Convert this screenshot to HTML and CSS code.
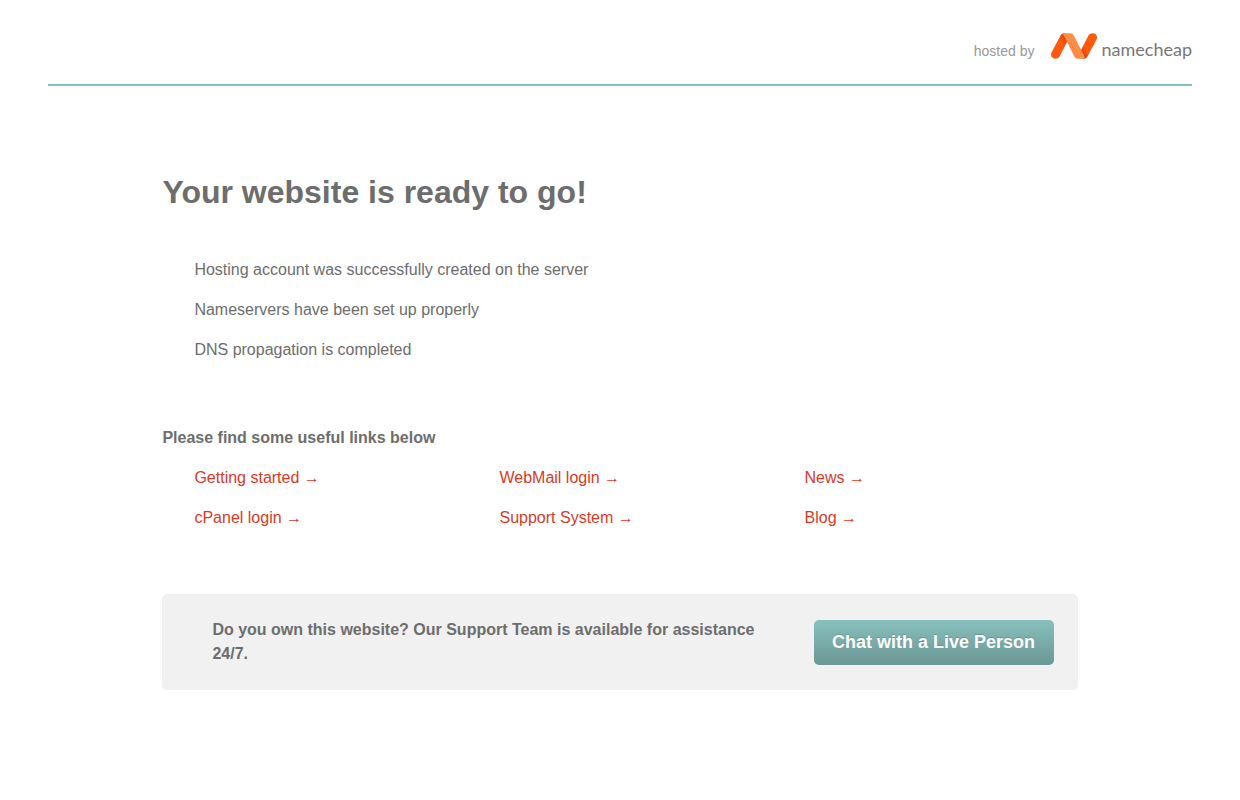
FILE: index.html
```html
<!DOCTYPE html>
<html lang="en">

<head>
    <meta charset="UTF-8">
    <meta name="viewport" content="width=device-width, initial-scale=1.0">
    <title>Your website is ready to go!</title>
    <link rel="stylesheet" href="styles.css">
</head>

<body>

    <header class="header">
        <span class="hosted">hosted by</span>
        <a class="logo" href="#">
            <svg class="logo-mark" viewBox="0 0 46 26" aria-hidden="true">
                <defs>
                    <linearGradient id="fold-left" x1="0" y1="1" x2="1" y2="0">
                        <stop offset="0.6" stop-color="#ff5a0c"/>
                        <stop offset="1" stop-color="#c8371f"/>
                    </linearGradient>
                    <linearGradient id="fold-right" x1="0" y1="1" x2="1" y2="0">
                        <stop offset="0" stop-color="#c8371f"/>
                        <stop offset="0.4" stop-color="#ff5a0c"/>
                    </linearGradient>
                </defs>
                <path fill="url(#fold-left)" d="M8.600 23.500L17 7C16.500 3 15 .5 13.500 .3C11.500 0 10.300 1 9.500 2.500L.5 19.500C-1 23 1 25.700 4 25.700C6.200 25.700 7.700 25 8.600 23.500Z"/>
                <path fill="url(#fold-right)" d="M37.400 2.500L29 19C29.500 23 31 25.500 32.500 25.700C34.500 26 35.700 25 36.500 23.500L45.500 6.500C47 3 45 .3 42 .3C39.800 .3 38.300 1 37.400 2.500Z"/>
                <path fill="#ff8c44" d="M12.500 .3H19C21 .3 22 1 23 3L33 22.500C33.500 24.500 34 25.700 33.500 25.700H27C25 25.700 24 25 23 23L14 4.500C13 2.500 12.500 1.500 11 1C11.500 .5 12 .3 12.500 .3Z"/>
            </svg>
            <span class="logo-name">namecheap</span>
        </a>
    </header>

    <main class="main">

        <h1>Your website is ready to go!</h1>

        <ul class="status">
            <li>Hosting account was successfully created on the server</li>
            <li>Nameservers have been set up properly</li>
            <li>DNS propagation is completed</li>
        </ul>

        <h2>Please find some useful links below</h2>

        <ul class="links">
            <li><a href="#">Getting started <span class="arrow">→</span></a></li>
            <li><a href="#">WebMail login <span class="arrow">→</span></a></li>
            <li><a href="#">News <span class="arrow">→</span></a></li>
            <li><a href="#">cPanel login <span class="arrow">→</span></a></li>
            <li><a href="#">Support System <span class="arrow">→</span></a></li>
            <li><a href="#">Blog <span class="arrow">→</span></a></li>
        </ul>

        <div class="support">
            <p>Do you own this website? Our Support Team is available for assistance 24/7.</p>
            <button class="chat" type="button">Chat with a Live Person</button>
        </div>

    </main>

</body>
</html>
```
FILE: styles.css
```css
body {
    font-family: Arial, "Liberation Sans", sans-serif;
    font-size: 16px;
    line-height: 24px;
    margin: 0;
    padding: 0 48px;
    background-color: #fff;
    color: #6d6d6d;
}

.header {
    display: flex;
    justify-content: flex-end;
    align-items: flex-end;
    gap: 16px;
    padding: 33px 0 21px;
    border-bottom: 2px solid #87c0bd;
}

.hosted {
    font-size: 14px;
    color: #999;
}

.logo {
    display: flex;
    align-items: flex-start;
    gap: 5px;
    height: 30px;
    color: #777;
    text-decoration: none;
}

.logo-mark {
    width: 46px;
    height: 26px;
}

.logo-name {
    font-family: Lato, "Open Sans", sans-serif;
    font-size: 18px;
    line-height: 32px;
}

.main {
    width: 80%;
    margin: 0 auto;
    padding: 84px 0 48px;
}

h1 {
    margin: 0;
    font-size: 32px;
    line-height: 44px;
}

h2 {
    margin: 56px 0 8px;
    font-size: 16px;
    line-height: 24px;
}

ul {
    margin: 0;
    padding: 0;
    list-style: none;
}

li {
    padding: 8px 0 8px 32px;
}

.status {
    margin-top: 36px;
}

.links {
    display: grid;
    grid-template-columns: repeat(3, 1fr);
}

.links a {
    color: #d93a26;
    text-decoration: none;
}

.links a:hover {
    text-decoration: underline;
}

.arrow {
    font-family: "Liberation Serif", serif;
}

.support {
    display: flex;
    justify-content: space-between;
    align-items: center;
    gap: 48px;
    margin-top: 56px;
    padding: 24px 24px 24px 50px;
    border-radius: 5px;
    background-color: #f1f1f1;
}

.support p {
    margin: 0;
    font-weight: bold;
}

.chat {
    flex-shrink: 0;
    width: 240px;
    height: 45px;
    padding: 0;
    border: 0;
    border-radius: 5px;
    background: linear-gradient(#87c0bd, #6b9794);
    color: #fff;
    font-family: inherit;
    font-size: 18px;
    font-weight: bold;
    text-shadow: 0 -1px 1px #6b9794;
    cursor: pointer;
}
```
